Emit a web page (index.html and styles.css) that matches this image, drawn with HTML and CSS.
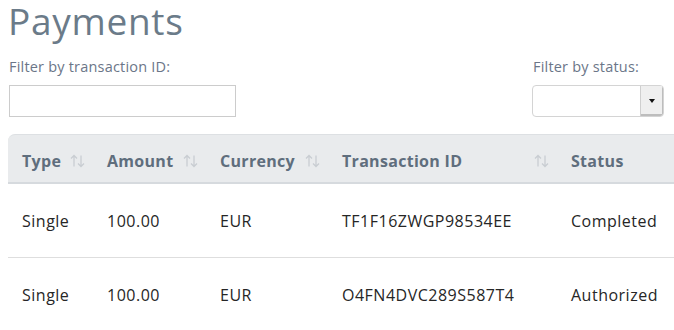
FILE: index.html
```html
<!DOCTYPE html>
<html>
<head>
<meta charset="utf-8">
<link rel="stylesheet" href="styles.css">
</head>
<body>
<div class="page">
  <h1 class="title">Payments</h1>
  <div class="filters">
    <div class="filter">
      <label class="label">Filter by transaction ID:</label>
      <div class="text-input"></div>
    </div>
    <div class="filter">
      <label class="label">Filter by status:</label>
      <div class="select">
        <div class="select-value"></div>
        <div class="select-btn"><span class="caret"></span></div>
      </div>
    </div>
  </div>
  <div class="table-wrap">
    <table class="table">
      <thead>
        <tr>
          <th class="c-type"><div class="th-in"><span>Type</span><svg class="sort" viewBox="0 0 15 14" width="15" height="14"><path d="M4 12.5V1.5M1 4.5L4 1.5L7 4.5M11 1.5V12.5M8 9.5L11 12.5L14 9.5" fill="none" stroke="#c9cdd2" stroke-width="1.3"/></svg></div></th>
          <th class="c-amount"><div class="th-in"><span>Amount</span><svg class="sort" viewBox="0 0 15 14" width="15" height="14"><path d="M4 12.5V1.5M1 4.5L4 1.5L7 4.5M11 1.5V12.5M8 9.5L11 12.5L14 9.5" fill="none" stroke="#c9cdd2" stroke-width="1.3"/></svg></div></th>
          <th class="c-cur"><div class="th-in"><span>Currency</span><svg class="sort" viewBox="0 0 15 14" width="15" height="14"><path d="M4 12.5V1.5M1 4.5L4 1.5L7 4.5M11 1.5V12.5M8 9.5L11 12.5L14 9.5" fill="none" stroke="#c9cdd2" stroke-width="1.3"/></svg></div></th>
          <th class="c-id"><div class="th-in"><span>Transaction ID</span><svg class="sort" viewBox="0 0 15 14" width="15" height="14"><path d="M4 12.5V1.5M1 4.5L4 1.5L7 4.5M11 1.5V12.5M8 9.5L11 12.5L14 9.5" fill="none" stroke="#c9cdd2" stroke-width="1.3"/></svg></div></th>
          <th class="c-status"><div class="th-in"><span>Status</span></div></th>
        </tr>
      </thead>
      <tbody>
        <tr>
          <td>Single</td>
          <td>100.00</td>
          <td>EUR</td>
          <td>TF1F16ZWGP98534EE</td>
          <td>Completed</td>
        </tr>
        <tr>
          <td>Single</td>
          <td>100.00</td>
          <td>EUR</td>
          <td>O4FN4DVC289S587T4</td>
          <td>Authorized</td>
        </tr>
      </tbody>
    </table>
  </div>
</div>
</body>
</html>
```
FILE: styles.css
```css
html, body {
  margin: 0;
  padding: 0;
  background: #ffffff;
  overflow: hidden;
}
body {
  font-family: "Open Sans", "Liberation Sans", sans-serif;
  width: 674px;
}
.page {
  padding: 0 10px 0 8px;
}
.title {
  margin: 0;
  font-size: 37px;
  line-height: 42px;
  letter-spacing: 0.7px;
  font-weight: 400;
  color: #6b7b89;
}
.filters {
  display: flex;
  justify-content: space-between;
  margin-top: 15px;
}
.filter {
  display: flex;
  flex-direction: column;
}
.label {
  font-size: 14.5px;
  line-height: 20px;
  letter-spacing: 0.2px;
  color: #6b7688;
  margin-bottom: 8px;
  padding-left: 1px;
}
.text-input {
  width: 225px;
  height: 30px;
  border: 1px solid #cccccc;
  margin-left: 1px;
}
.select {
  display: flex;
  width: 130px;
  height: 30px;
  border: 1px solid #d4d4d4;
  border-radius: 4px;
  overflow: hidden;
}
.select-value {
  flex: 1;
}
.select-btn {
  width: 22px;
  background: #efefef;
  border-left: 1px solid #cfcfcf;
  box-shadow: inset -1px -2px 0 #bdbdbd;
  display: flex;
  align-items: center;
  justify-content: center;
}
.caret {
  width: 0;
  height: 0;
  border-left: 3.5px solid transparent;
  border-right: 3.5px solid transparent;
  border-top: 4px solid #111;
  margin-top: -1px;
}
.table-wrap {
  margin-top: 17px;
  width: 720px;
}
.table {
  border-collapse: separate;
  border-spacing: 0;
  width: 100%;
  font-size: 16px;
  line-height: 20px;
}
.table th {
  background: #e9ebed;
  border-top: 1px solid #dde0e3;
  border-bottom: 2px solid #d6dade;
  padding: 16px 8px 11px 14px;
  text-align: left;
  font-weight: 700;
  letter-spacing: 0.3px;
  color: #5f6e7d;
}
.table th.c-type {
  border-top-left-radius: 7px;
}
.th-in {
  display: flex;
  justify-content: space-between;
  align-items: center;
}
.sort {
  display: block;
  flex: none;
}
.c-type { width: 63px; }
.c-amount { width: 91px; }
.c-cur { width: 100px; }
.c-id { width: 207px; }
.table td {
  padding: 27px 8px 26px 14px;
  color: #262626;
  letter-spacing: 0.5px;
  border-bottom: 1px solid #dedede;
  white-space: nowrap;
}
```
